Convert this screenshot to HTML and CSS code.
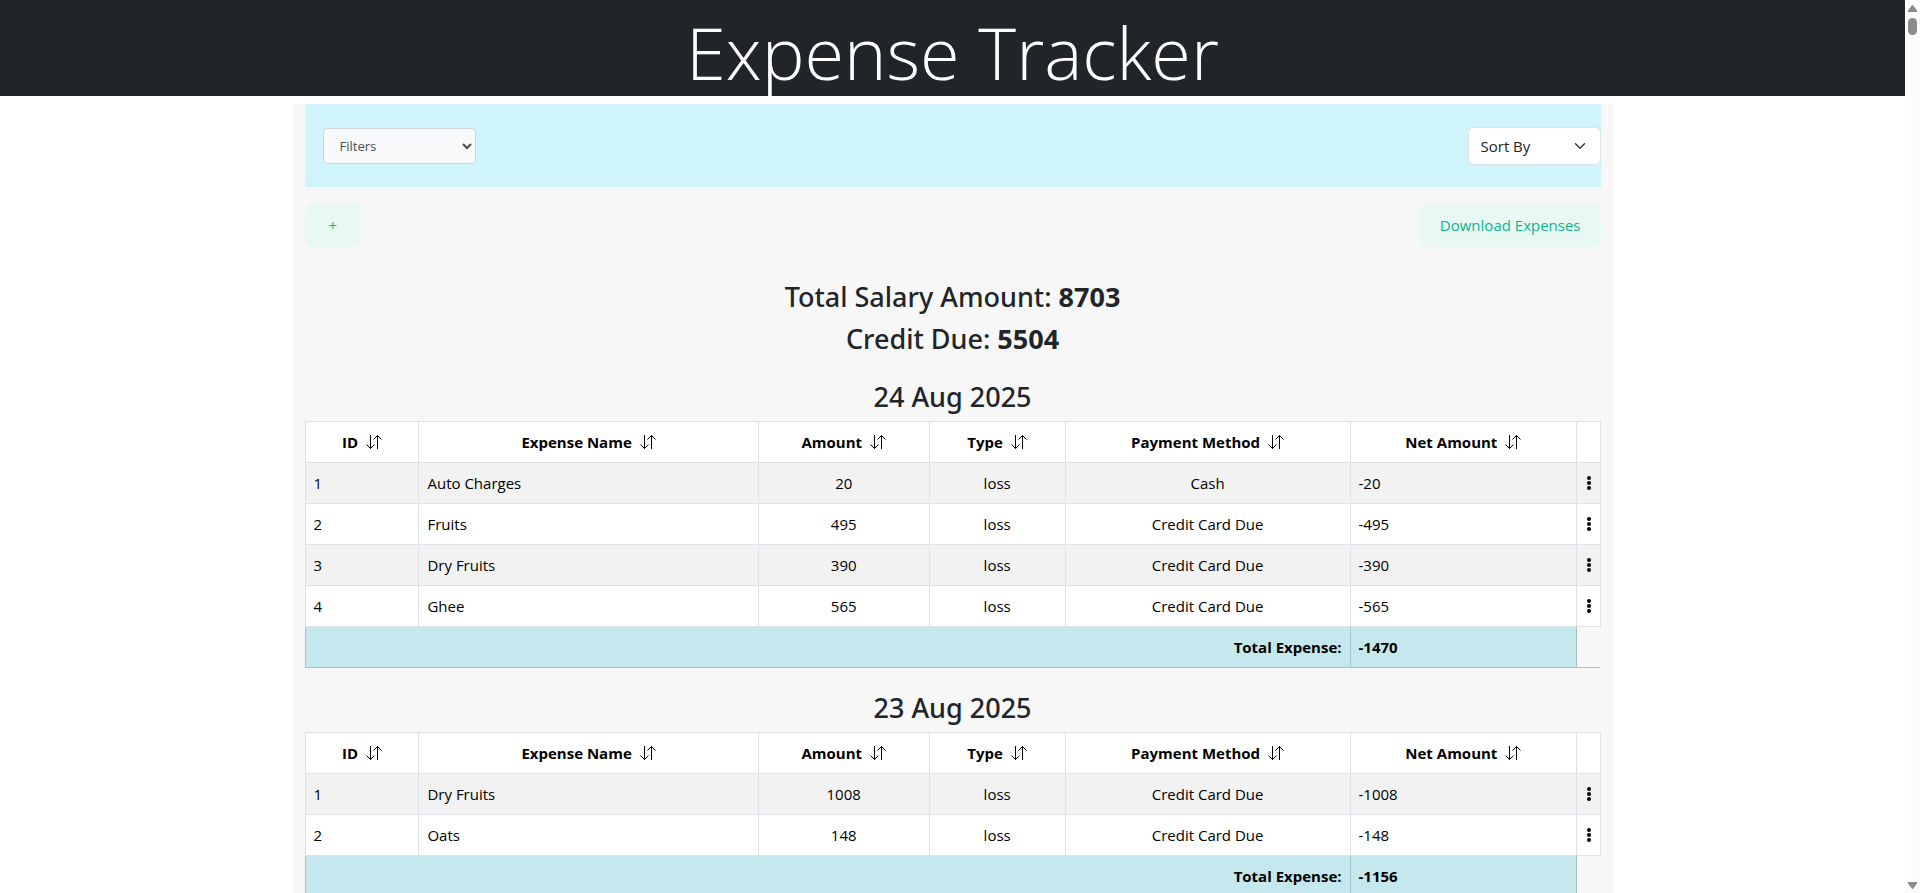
FILE: index.html
```html
<!DOCTYPE html>
<html lang="en">
<head>
<meta charset="utf-8">
<title>Expense Tracker</title>
<link rel="stylesheet" href="styles.css">
</head>
<body>
<svg class="sprite" aria-hidden="true">
  <symbol id="sort" viewBox="0 0 16 14"><path d="M4.5 0v13.500M0.500 9.500l4 4 4-4M11.500 14V0.500M7.500 4.500l4-4 4 4" fill="none" stroke="currentColor" stroke-width="1"/></symbol>
  <symbol id="dots" viewBox="0 0 4 14"><circle cx="2" cy="2" r="2"/><circle cx="2" cy="7" r="2"/><circle cx="2" cy="12" r="2"/></symbol>
</svg>
<div class="page">
  <header class="masthead"><h1>Expense Tracker</h1></header>
  <main class="container">
    <div class="toolbar">
      <select class="filters" aria-label="Filters"><option>Filters</option></select>
      <select class="sort-by" aria-label="Sort by"><option>Sort By</option></select>
    </div>
    <div class="actions">
      <button class="btn btn-add" type="button" aria-label="Add expense">+</button>
      <button class="btn" type="button">Download Expenses</button>
    </div>
    <section class="summary">
      <h3>Total Salary Amount: <b>8703</b></h3>
      <h3>Credit Due: <b>5504</b></h3>
    </section>
    <section class="day">
      <h3>24 Aug 2025</h3>
      <table class="expenses">
        <colgroup><col class="c-id"><col class="c-name"><col class="c-amount"><col class="c-type"><col class="c-method"><col class="c-net"><col class="c-menu"></colgroup>
        <thead><tr>
          <th>ID<svg class="sort"><use href="#sort"/></svg></th>
          <th>Expense Name<svg class="sort"><use href="#sort"/></svg></th>
          <th>Amount<svg class="sort"><use href="#sort"/></svg></th>
          <th>Type<svg class="sort"><use href="#sort"/></svg></th>
          <th>Payment Method<svg class="sort"><use href="#sort"/></svg></th>
          <th>Net Amount<svg class="sort"><use href="#sort"/></svg></th>
          <th></th>
        </tr></thead>
        <tbody>
          <tr><td>1</td><td>Auto Charges</td><td class="mid">20</td><td class="mid">loss</td><td class="mid">Cash</td><td>-20</td><td class="menu"><button type="button" aria-label="Row menu"><svg><use href="#dots"/></svg></button></td></tr>
          <tr><td>2</td><td>Fruits</td><td class="mid">495</td><td class="mid">loss</td><td class="mid">Credit Card Due</td><td>-495</td><td class="menu"><button type="button" aria-label="Row menu"><svg><use href="#dots"/></svg></button></td></tr>
          <tr><td>3</td><td>Dry Fruits</td><td class="mid">390</td><td class="mid">loss</td><td class="mid">Credit Card Due</td><td>-390</td><td class="menu"><button type="button" aria-label="Row menu"><svg><use href="#dots"/></svg></button></td></tr>
          <tr><td>4</td><td>Ghee</td><td class="mid">565</td><td class="mid">loss</td><td class="mid">Credit Card Due</td><td>-565</td><td class="menu"><button type="button" aria-label="Row menu"><svg><use href="#dots"/></svg></button></td></tr>
        </tbody>
        <tfoot><tr><td class="total-label" colspan="5">Total Expense:</td><td>-1470</td><td class="blank"></td></tr></tfoot>
      </table>
    </section>
    <section class="day">
      <h3>23 Aug 2025</h3>
      <table class="expenses">
        <colgroup><col class="c-id"><col class="c-name"><col class="c-amount"><col class="c-type"><col class="c-method"><col class="c-net"><col class="c-menu"></colgroup>
        <thead><tr>
          <th>ID<svg class="sort"><use href="#sort"/></svg></th>
          <th>Expense Name<svg class="sort"><use href="#sort"/></svg></th>
          <th>Amount<svg class="sort"><use href="#sort"/></svg></th>
          <th>Type<svg class="sort"><use href="#sort"/></svg></th>
          <th>Payment Method<svg class="sort"><use href="#sort"/></svg></th>
          <th>Net Amount<svg class="sort"><use href="#sort"/></svg></th>
          <th></th>
        </tr></thead>
        <tbody>
          <tr><td>1</td><td>Dry Fruits</td><td class="mid">1008</td><td class="mid">loss</td><td class="mid">Credit Card Due</td><td>-1008</td><td class="menu"><button type="button" aria-label="Row menu"><svg><use href="#dots"/></svg></button></td></tr>
          <tr><td>2</td><td>Oats</td><td class="mid">148</td><td class="mid">loss</td><td class="mid">Credit Card Due</td><td>-148</td><td class="menu"><button type="button" aria-label="Row menu"><svg><use href="#dots"/></svg></button></td></tr>
        </tbody>
        <tfoot><tr><td class="total-label" colspan="5">Total Expense:</td><td>-1156</td><td class="blank"></td></tr></tfoot>
      </table>
    </section>
  </main>
</div>
<div class="scrollbar" aria-hidden="true">
  <svg width="9" height="7" viewBox="0 0 9 7"><path d="M3.700.600a1 1 0 0 1 1.600 0L9 5.500V7H0V5.500z" fill="#8b8b8b"/></svg>
  <span class="thumb"></span>
  <svg class="down" width="9" height="7" viewBox="0 0 9 7"><path d="M3.700 6.400a1 1 0 0 0 1.600 0L9 1.500V0H0V1.500z" fill="#8b8b8b"/></svg>
</div>
</body>
</html>
```
FILE: styles.css
```css
* { box-sizing: border-box; }

body {
  margin: 0;
  display: flex;
  height: 100vh;
  overflow: hidden;
  background: #fff;
  color: #212529;
  font: 400 15px/24px "Open Sans", "Noto Sans", sans-serif;
}

.sprite { display: none; }

.page { flex: 1; overflow: hidden; }

.masthead { background: #212529; color: #fff; text-align: center; }

.masthead h1 {
  margin: 0;
  font-size: 72px;
  font-weight: 300;
  line-height: 96px;
  padding-top: 4px;
  height: 96px;
}

.container {
  max-width: 1320px;
  margin: 8px auto 0;
  padding: 0 12px 24px;
  background: #f7f7f7;
}

.toolbar {
  display: flex;
  justify-content: space-between;
  align-items: center;
  padding: 23px 0 22px 18px;
  background: #cff4fc;
}

.filters {
  width: 153px;
  height: 36px;
  padding: 0 0 0 12px;
  border: 1px solid #ced4da;
  border-radius: 4px;
  background: #f8f9fa;
  color: #495057;
  font: 400 13px/20px "Open Sans", sans-serif;
}

.sort-by {
  appearance: none;
  width: 133px;
  height: 38px;
  padding: 0 36px 0 12px;
  border: 1px solid #dee2e6;
  border-radius: 6px;
  background: #fff url("data:image/svg+xml,%3csvg xmlns='http://www.w3.org/2000/svg' viewBox='0 0 16 16'%3e%3cpath fill='none' stroke='%23343a40' stroke-linecap='round' stroke-linejoin='round' stroke-width='2' d='m2 5 6 6 6-6'/%3e%3c/svg%3e") no-repeat right 12px center / 16px 12px;
  color: #212529;
  font: 400 15px/24px "Open Sans", sans-serif;
}

.actions { display: flex; justify-content: space-between; margin-top: 16px; }

.btn {
  height: 44px;
  padding: 0 20px;
  border: 0;
  border-radius: 8px;
  background: #e8f8f3;
  color: #10b38b;
  font: 400 15px/24px "Open Sans", sans-serif;
}

.btn-add { padding: 0 24px; }

h3 {
  margin: 0 0 8px;
  font-family: "Noto Sans", "Open Sans", sans-serif;
  font-size: 27px;
  font-weight: 500;
  line-height: 34px;
  text-align: center;
}

.summary { margin: 33px 0 24px; }

.day { margin-bottom: 23px; }

.day h3 { margin-bottom: 7px; }

.expenses {
  width: 100%;
  table-layout: fixed;
  border-collapse: collapse;
  color: #000;
}

.c-id { width: 8.8%; }
.c-name { width: 26.2%; }
.c-amount { width: 13.2%; }
.c-type { width: 10.5%; }
.c-method { width: 22%; }
.c-net { width: 17.5%; }

.expenses th,
.expenses td {
  height: 41px;
  padding: 8px;
  border: 1px solid #dee2e6;
  background: #fff;
}

.expenses tbody tr:nth-child(odd) td { background: #f2f2f2; }
.expenses .mid { text-align: center; }
.expenses th { font-weight: 700; }

.sort { width: 16px; height: 14px; margin-left: 8px; vertical-align: -1px; }

.expenses .menu { padding: 0 0 0 2px; text-align: center; }

.menu button { display: block; width: 100%; padding: 0; border: 0; background: none; }
.menu svg { display: block; width: 4px; height: 14px; margin: 0 auto; }

.expenses tfoot td {
  background: #c5e8ee;
  border-color: #a6c3ca;
  border-top-color: #c5e8ee;
  font-weight: 700;
}

.expenses .total-label { text-align: right; }

.expenses tfoot .blank { background: none; border-right: 0; border-top-color: #dee2e6; }

.scrollbar {
  display: flex;
  flex-direction: column;
  align-items: center;
  width: 15px;
  padding: 5px 0 4px;
  background: #fcfcfc;
}

.thumb { width: 9px; height: 17px; margin-top: 6px; border-radius: 5px; background: #8b8b8b; }

.down { margin-top: auto; }
```
